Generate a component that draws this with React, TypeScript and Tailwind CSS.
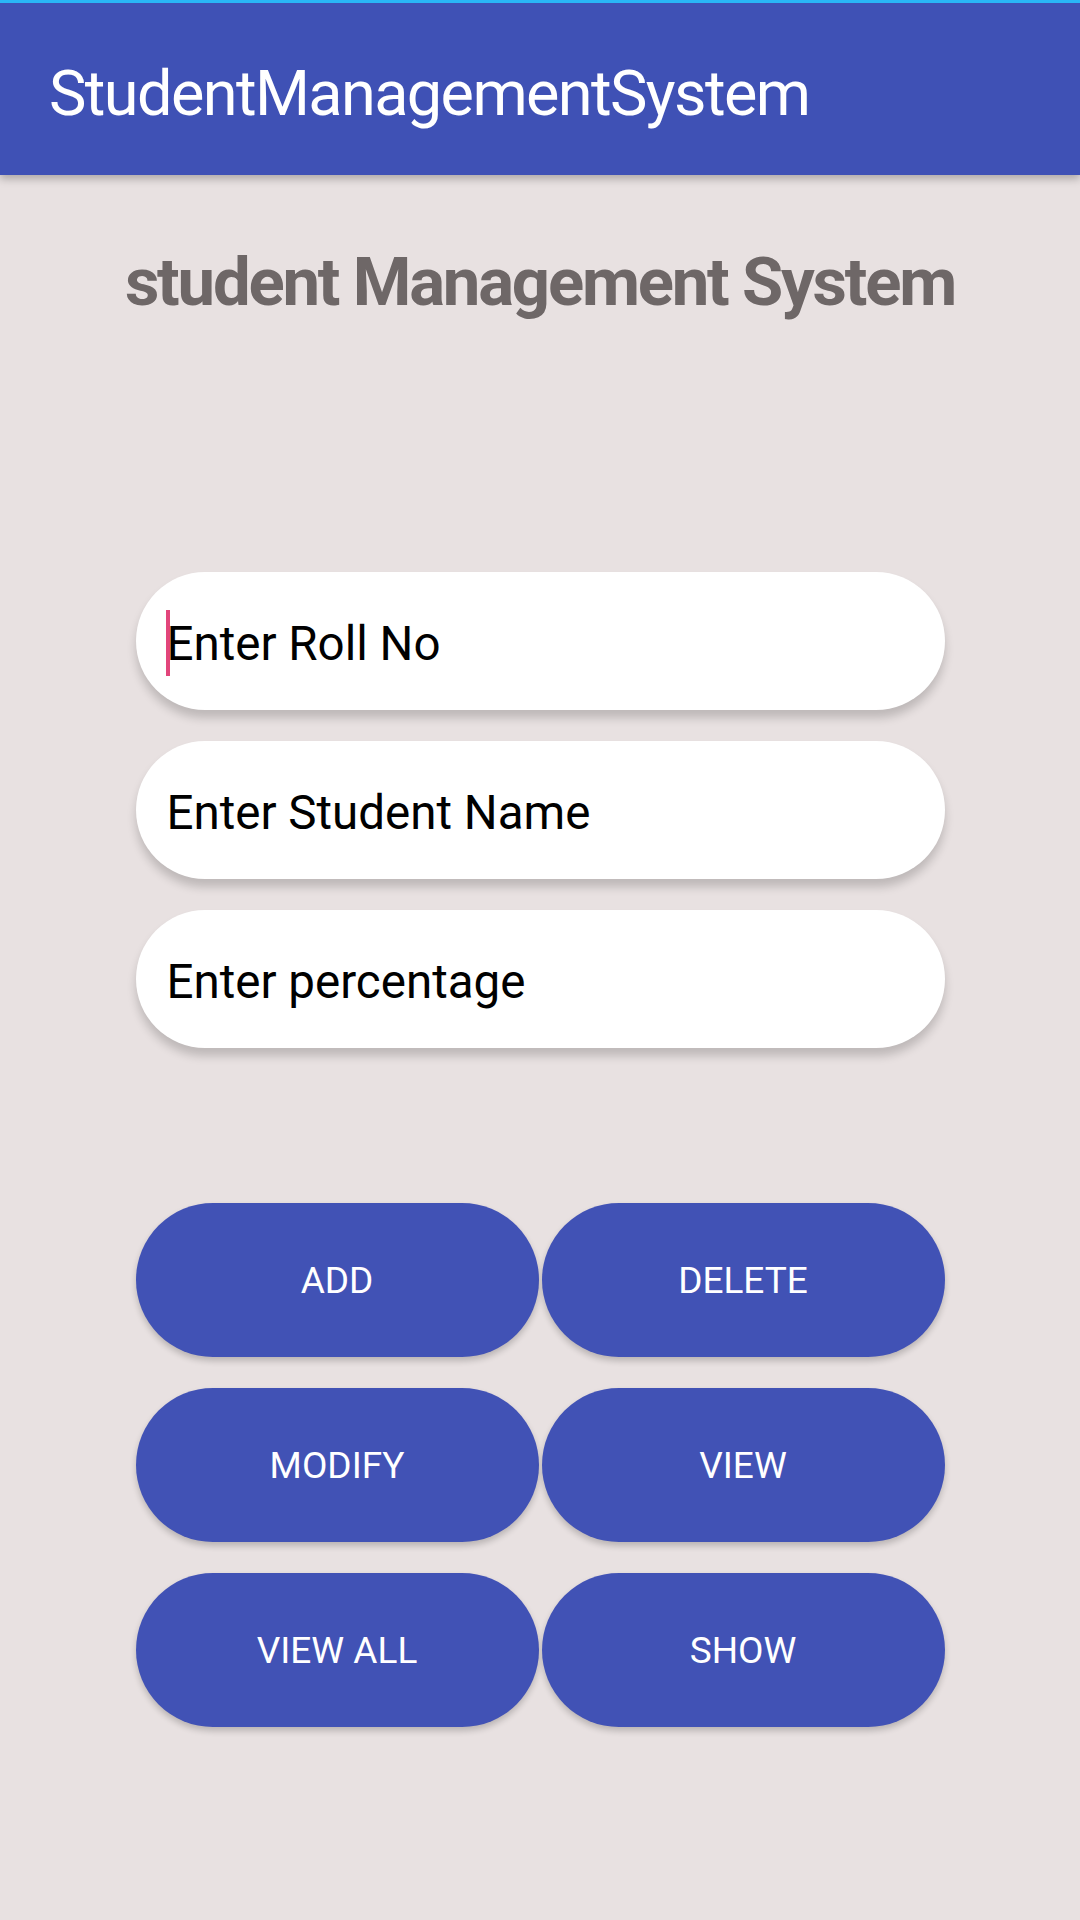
import React from 'react';

const fields = [
  { placeholder: "Enter Roll No", focused: true },
  { placeholder: "Enter Student Name", focused: false },
  { placeholder: "Enter percentage", focused: false },
];

const actions = ["ADD", "DELETE", "MODIFY", "VIEW", "VIEW ALL", "SHOW"];

const App: React.FC = () => {
  return (
    <div className="w-[1080px] h-[1920px] overflow-hidden bg-[#e8e1e1] font-['Roboto',sans-serif]">
      {/* App bar */}
      <div className="relative z-10 h-[175px] border-t-[3px] border-[#29b6f6] bg-[#3f51b5] pt-[8px] pl-[49px] flex items-center shadow-[0_4px_8px_rgba(0,0,0,0.25)]">
        <h1 className="text-[63px] leading-none font-normal tracking-[-1.6px] text-white">StudentManagementSystem</h1>
      </div>

      {/* Heading */}
      <h2 className="mt-[67px] text-center text-[67px] leading-[80px] font-bold tracking-[-2.2px] text-[#6e6767]">
        student Management System
      </h2>

      {/* Inputs */}
      <div className="mt-[250px] mx-auto w-[809px] flex flex-col gap-[31px]">
        {fields.map((f) => (
          <div
            key={f.placeholder}
            className="h-[138px] rounded-full bg-white flex items-center pl-[30px] shadow-[0_8px_10px_rgba(0,0,0,0.18)]"
          >
            {f.focused ? <span className="w-[4px] h-[66px] mt-[3px] bg-[#e2457b]" /> : <span className="w-[4px]" />}
            <span className="-ml-[3px] mt-[7px] text-[47.5px] text-black leading-none">{f.placeholder}</span>
          </div>
        ))}
      </div>

      {/* Buttons */}
      <div className="mt-[155px] mx-auto w-[809px] grid grid-cols-2 gap-x-[3px] gap-y-[31px]">
        {actions.map((a) => (
          <button
            key={a}
            className="h-[154px] rounded-full bg-[#4152b5] text-white text-[37px] leading-none shadow-[0_4px_6px_rgba(0,0,0,0.2)]"
          >
            {a}
          </button>
        ))}
      </div>
    </div>
  );
};

export default App;
